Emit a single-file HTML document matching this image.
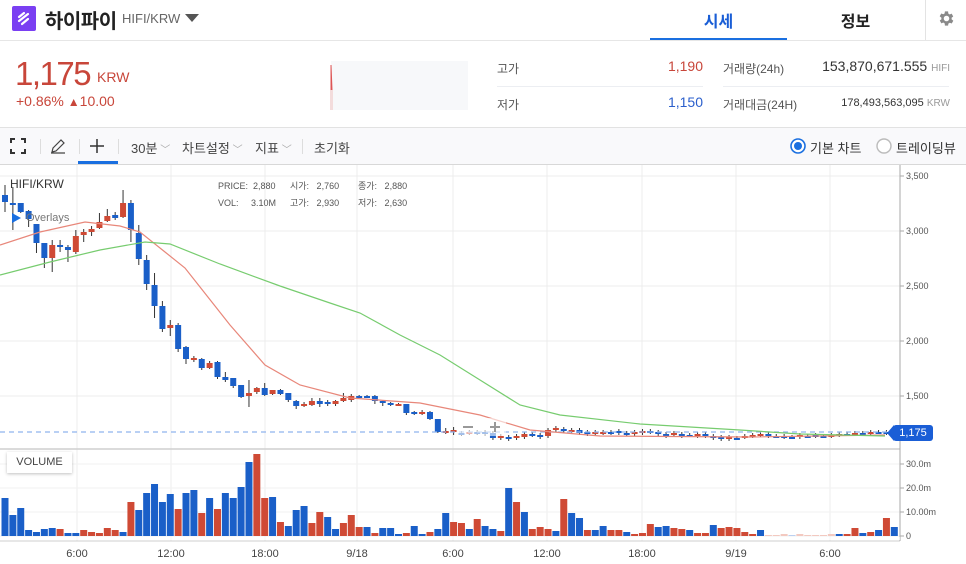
<!DOCTYPE html>
<html><head><meta charset="utf-8">
<style>
*{margin:0;padding:0;box-sizing:border-box}
body{width:966px;height:564px;overflow:hidden;background:#fff;font-family:"Liberation Sans","Noto Sans CJK KR",sans-serif;position:relative;color:#333}
.a{position:absolute;white-space:nowrap}
</style></head><body>
<!-- header -->
<div class="a" style="left:12px;top:6px;width:24px;height:25px;background:#7a3ff2;border-radius:2px"></div>
<svg class="a" style="left:12px;top:6px" width="24" height="25" viewBox="0 0 24 25"><path d="M7 11l5-4M7 15l9-7M10 18l6-5" stroke="#fff" stroke-width="2.2" stroke-linecap="round"/></svg>
<div class="a" style="left:45px;top:5px;font-size:20px;font-weight:bold;color:#222;letter-spacing:-0.5px">하이파이</div>
<div class="a" style="left:122px;top:11px;font-size:13px;color:#666">HIFI/KRW</div>
<svg class="a" style="left:185px;top:14px" width="14" height="8"><path d="M0 0h14L7 8z" fill="#555"/></svg>
<div class="a" style="left:650px;top:8px;width:137px;text-align:center;font-size:16px;font-weight:bold;color:#1a5ed6">시세</div>
<div class="a" style="left:650px;top:38px;width:137px;height:3px;background:#1a6fe0"></div>
<div class="a" style="left:787px;top:8px;width:137px;text-align:center;font-size:16px;font-weight:bold;color:#222">정보</div>
<div class="a" style="left:925px;top:0;width:1px;height:40px;background:#e3e3e3"></div>
<svg class="a" style="left:937px;top:9px" width="19" height="19" viewBox="0 0 24 24"><path fill="#8a8a8a" d="M19.4 13a7.5 7.5 0 000-2l2.1-1.6-2-3.5-2.5 1a7.6 7.6 0 00-1.7-1L15 3h-4l-.4 2.7a7.6 7.6 0 00-1.7 1l-2.5-1-2 3.5L6.6 11a7.5 7.5 0 000 2l-2.1 1.6 2 3.5 2.5-1a7.6 7.6 0 001.7 1L11 21h4l.4-2.7a7.6 7.6 0 001.7-1l2.5 1 2-3.5zM13 15.5a3.5 3.5 0 110-7 3.5 3.5 0 010 7z" transform="translate(-1 0)"/></svg>
<div class="a" style="left:0;top:40px;width:966px;height:1px;background:#e6e6e6"></div>
<!-- price -->
<div class="a" style="left:15px;top:55px;font-size:33px;color:#c8463a;letter-spacing:-1.5px">1,175</div>
<div class="a" style="left:97px;top:69px;font-size:14px;color:#c8463a">KRW</div>
<div class="a" style="left:16px;top:93px;font-size:14px;color:#c8463a">+0.86% <span style="font-size:12px">▲</span>10.00</div>
<div class="a" style="left:331px;top:61px;width:137px;height:49px;background:#f7f8fa"></div>
<svg class="a" style="left:330px;top:60px" width="10" height="50"><path d="M1 50V5L2 30" stroke="#d55" stroke-width="1" fill="none"/><rect x="0" y="30" width="3" height="20" fill="#f3dcdc"/></svg>
<div class="a" style="left:497px;top:60px;font-size:12px;color:#555">고가</div>
<div class="a" style="left:600px;top:58px;width:103px;text-align:right;font-size:14px;color:#c8463a">1,190</div>
<div class="a" style="left:497px;top:86px;width:206px;height:1px;background:#eceef2"></div>
<div class="a" style="left:497px;top:96px;font-size:12px;color:#555">저가</div>
<div class="a" style="left:600px;top:94px;width:103px;text-align:right;font-size:14px;color:#2b5fcc">1,150</div>
<div class="a" style="left:723px;top:60px;font-size:12px;color:#555">거래량(24h)</div>
<div class="a" style="left:760px;top:58px;width:190px;text-align:right;font-size:14px;color:#333">153,870,671.555 <span style="font-size:10px;color:#999">HIFI</span></div>
<div class="a" style="left:723px;top:86px;width:226px;height:1px;background:#eceef2"></div>
<div class="a" style="left:723px;top:96px;font-size:12px;color:#555">거래대금(24H)</div>
<div class="a" style="left:760px;top:97px;width:190px;text-align:right;font-size:11px;color:#333">178,493,563,095 <span style="font-size:10px;color:#999">KRW</span></div>
<!-- toolbar -->
<div class="a" style="left:0;top:127px;width:966px;height:38px;background:#f9f9fb;border-top:1px solid #e2e2e2;border-bottom:1px solid #d8d8d8"></div>
<svg class="a" style="left:10px;top:138px" width="16" height="16"><path d="M1 5V1h4M11 1h4v4M15 11v4h-4M5 15H1v-4" stroke="#333" stroke-width="2" fill="none"/></svg>
<div class="a" style="left:40px;top:139px;width:1px;height:15px;background:#ddd"></div>
<svg class="a" style="left:49px;top:137px" width="18" height="18"><path d="M2 16h14M3 15l1-4 8-8 3 3-8 8z" stroke="#444" stroke-width="1.2" fill="none"/></svg>
<div class="a" style="left:79px;top:139px;width:1px;height:15px;background:#ddd"></div>
<svg class="a" style="left:89px;top:138px" width="16" height="16"><path d="M8 1v14M1 8h14" stroke="#333" stroke-width="1.5"/></svg>
<div class="a" style="left:78px;top:161px;width:40px;height:3px;background:#1a6fe0"></div>
<div class="a" style="left:118px;top:139px;width:1px;height:15px;background:#ddd"></div>
<div class="a" style="left:131px;top:138px;font-size:13px;color:#444">30분<span style="color:#aaa;font-size:10px"> ﹀</span></div>
<div class="a" style="left:182px;top:138px;font-size:13px;color:#444">차트설정<span style="color:#aaa;font-size:10px"> ﹀</span></div>
<div class="a" style="left:255px;top:138px;font-size:13px;color:#444">지표<span style="color:#aaa;font-size:10px"> ﹀</span></div>
<div class="a" style="left:302px;top:139px;width:1px;height:15px;background:#ddd"></div>
<div class="a" style="left:314px;top:138px;font-size:13px;color:#444">초기화</div>
<svg class="a" style="left:790px;top:138px" width="16" height="16"><circle cx="8" cy="8" r="7" stroke="#1a6fe0" stroke-width="1.6" fill="#fff"/><circle cx="8" cy="8" r="4" fill="#1a6fe0"/></svg>
<div class="a" style="left:810px;top:138px;font-size:13px;color:#333">기본 차트</div>
<svg class="a" style="left:876px;top:138px" width="16" height="16"><circle cx="8" cy="8" r="7" stroke="#bbb" stroke-width="1.4" fill="#fff"/></svg>
<div class="a" style="left:896px;top:138px;font-size:13px;color:#333">트레이딩뷰</div>
<!-- chart -->
<svg id="ch" class="a" style="left:0;top:0" width="966" height="564"></svg>
<div class="a" style="left:10px;top:177px;font-size:12px;color:#333">HIFI/KRW</div>
<div class="a" style="left:218px;top:178px;font-size:9px;color:#555;line-height:17px">PRICE: &nbsp;2,880<br>VOL: &nbsp;&nbsp;&nbsp;&nbsp;3.10M</div>
<div class="a" style="left:290px;top:178px;font-size:9px;color:#555;line-height:17px">시가: &nbsp;&nbsp;2,760<br>고가: &nbsp;&nbsp;2,930</div>
<div class="a" style="left:358px;top:178px;font-size:9px;color:#555;line-height:17px">종가: &nbsp;&nbsp;2,880<br>저가: &nbsp;&nbsp;2,630</div>
<svg class="a" style="left:12px;top:213px" width="9" height="10"><path d="M0 0l9 5-9 5z" fill="#1a6fe0"/></svg>
<div class="a" style="left:26px;top:212px;font-size:11px;color:#777">Overlays</div>
<div class="a" style="left:7px;top:452px;width:65px;height:21px;background:#fff;box-shadow:0 1px 3px rgba(0,0,0,.25);font-size:11px;color:#444;text-align:center;line-height:21px">VOLUME</div>
<div class="a" style="left:893px;top:425px;width:40px;height:16px;background:#1a5ed6;border-radius:3px;color:#fff;font-size:11px;text-align:center;line-height:16px">1,175</div>
<svg class="a" style="left:887px;top:425px" width="7" height="16"><path d="M7 0v16L0 8z" fill="#1a5ed6"/></svg>
<script>
var s=document.getElementById('ch'),h='';
var R='#cf4a35',B='#1a5fc8';
[77,171,265,357,453,547,642,736,830].forEach(function(x){h+='<line x1="'+x+'" y1="165" x2="'+x+'" y2="541" stroke="#ececec"/>'});
[176,231,286,341,396].forEach(function(y){h+='<line x1="0" y1="'+y+'" x2="900" y2="'+y+'" stroke="#ececec"/>'});
[464,488,512,536].forEach(function(y){h+='<line x1="0" y1="'+y+'" x2="900" y2="'+y+'" stroke="#f2f2f2"/>'});
h+='<line x1="0" y1="449" x2="900" y2="449" stroke="#cfcfcf" stroke-width="1.5"/>';
h+='<line x1="0" y1="541" x2="900" y2="541" stroke="#cfcfcf"/>';
h+='<line x1="900" y1="165" x2="900" y2="541" stroke="#aaa"/>';
var pl=[[176,'3,500'],[231,'3,000'],[286,'2,500'],[341,'2,000'],[396,'1,500']];
pl.forEach(function(p){h+='<line x1="900" y1="'+p[0]+'" x2="904" y2="'+p[0]+'" stroke="#aaa"/><text x="906" y="'+(p[0]+3)+'" font-size="9" fill="#555" font-family="Liberation Sans">'+p[1]+'</text>'});
[[464,'30.0m'],[488,'20.0m'],[512,'10.00m'],[536,'0']].forEach(function(p){h+='<line x1="900" y1="'+p[0]+'" x2="904" y2="'+p[0]+'" stroke="#aaa"/><text x="906" y="'+(p[0]+3)+'" font-size="9" fill="#555" font-family="Liberation Sans">'+p[1]+'</text>'});
[[77,'6:00'],[171,'12:00'],[265,'18:00'],[357,'9/18'],[453,'6:00'],[547,'12:00'],[642,'18:00'],[736,'9/19'],[830,'6:00']].forEach(function(p){h+='<text x="'+p[0]+'" y="557" font-size="11" fill="#444" text-anchor="middle" font-family="Liberation Sans">'+p[1]+'</text>'});
var C=[[195,202,185,212],[203,204,187,230],[203,212,203,213],[211,219,210,227],[224,243,224,253],[243,258,243,268],[258,245,240,272],[245,247,240,252],[247,250,245,262],[252,236,230,254],[235,232,229,242],[232,229,226,236],[228,222,213,229],[221,216,209,222],[215,218,212,220],[217,203,190,218],[203,230,200,242],[233,259,225,265],[260,284,255,290],[285,306,273,318],[306,329,301,332],[328,325,320,336],[325,349,323,352],[347,359,346,364],[360,358,356,362],[359,368,358,370],[368,363,361,369],[362,377,361,379],[377,380,372,382],[378,386,378,388],[385,397,385,398],[396,393,380,407],[392,388,387,394],[388,395,383,396],[394,390,390,395],[390,394,389,395],[393,400,393,402],[401,406,400,409],[406,404,402,407],[405,401,398,406],[401,404,398,407],[402,404,400,406],[404,401,400,406],[401,398,393,402],[400,396,394,402],[396,397,395,398],[396,397,395,398],[396,401,395,404],[401,403,400,406],[403,405,402,406],[405,404,403,406],[404,413,404,415],[412,414,411,415],[414,412,410,415],[412,419,411,420],[419,432,419,433],[432,431,428,434],[432,430,427,435]];
var rest=[[433,434],[433,432],[432,433],[432,434],[433,438],[438,436],[437,439],[438,436],[437,434],[434,435],[435,437],[436,430],[430,428],[429,431],[431,430],[430,433],[432,434],[434,432],[433,432],[432,433],[431,433],[433,434],[434,432],[433,431],[431,432],[432,434],[434,436],[435,433],[434,436],[435,435],[436,434],[434,436],[436,438],[437,439],[439,437],[438,438],[437,436],[436,435],[435,434],[434,436],[436,436],[436,437],[437,437],[437,435],[436,436],[435,436],[436,436],[436,435],[435,434],[434,434],[434,433],[433,434],[434,432],[432,432],[432,433],[433,432]];
rest.forEach(function(r){C.push([r[0],r[1],Math.min(r[0],r[1])-2,Math.max(r[0],r[1])+2])});
C.forEach(function(c,i){var x=5+i*7.87,up=c[1]<c[0],col=up?R:B,t=Math.min(c[0],c[1]),bh=Math.max(2,Math.abs(c[0]-c[1]));
h+='<line x1="'+x+'" y1="'+c[2]+'" x2="'+x+'" y2="'+c[3]+'" stroke="#333" stroke-width="1"/><rect x="'+(x-3)+'" y="'+t+'" width="6" height="'+bh+'" fill="'+col+'"/>'});
h+='<line x1="0" y1="432" x2="890" y2="432" stroke="#8fb4ee" stroke-width="1.2" stroke-dasharray="5,4"/>';
function line(p,c){var d='M'+p[0][0]+' '+p[0][1];for(var i=1;i<p.length;i++)d+='L'+p[i][0]+' '+p[i][1];h+='<path d="'+d+'" stroke="'+c+'" stroke-width="1.2" fill="none"/>'}
line([[0,245],[40,232],[85,222],[120,226],[140,232],[165,252],[185,268],[200,287],[230,325],[265,365],[300,385],[350,398],[420,403],[480,415],[530,430],[600,436],[750,437],[885,435]],'#e8877a');
line([[0,275],[50,262],[100,250],[145,242],[170,244],[220,264],[280,286],[330,303],[360,313],[400,335],[440,355],[480,380],[520,405],[560,415],[640,424],[740,430],[800,434],[885,436]],'#77cc6f');
var V=[[B,38],[B,21],[B,28],[B,6],[B,4],[B,7],[B,8],[R,7],[B,3],[B,3],[R,6],[R,4],[R,3],[R,8],[R,6],[B,4],[R,34],[B,26],[B,43],[B,52],[B,34],[B,42],[R,27],[B,43],[B,46],[R,23],[B,38],[R,27],[B,43],[B,38],[B,49],[B,74],[R,82],[R,38],[B,39],[R,14],[B,10],[B,26],[B,30],[R,13],[R,24],[B,19],[B,7],[R,13],[R,21],[R,9],[B,9],[R,3],[B,8],[B,8],[B,2],[R,3],[B,10],[B,2],[R,4],[B,7],[B,23],[R,14],[R,13],[B,7],[R,17],[B,10],[B,7],[R,5],[B,48],[R,34],[B,24],[R,7],[R,9],[R,7],[B,5],[R,37],[B,23],[B,18],[R,6],[B,6],[B,10],[R,6],[R,6],[B,4],[R,2],[R,3],[R,12],[B,9],[B,10],[R,8],[R,7],[B,6],[R,3],[R,3],[B,11],[R,8],[R,9],[R,8],[R,4],[R,2],[B,6],['#f3c9c0',1],['#f3c9c0',1],['#f3c9c0',2],['#bcd0f0',1],['#f3c9c0',2],['#f3c9c0',1],['#f3c9c0',1],['#f3c9c0',1],['#f3c9c0',2],[B,2],[R,2],[R,8],[B,3],[R,4],[B,6],[R,18],[B,9]];
V.forEach(function(v,i){var x=5+i*7.87;h+='<rect x="'+(x-3.5)+'" y="'+(536-v[1])+'" width="7" height="'+v[1]+'" fill="'+v[0]+'"/>'});
h+='<rect x="0" y="537" width="900" height="3" fill="#fff" opacity=".6"/>';
h+='<rect x="458" y="418" width="48" height="18" fill="#fff" opacity=".6"/><path d="M463 427h10M490 427h10M495 422v10" stroke="#999" stroke-width="2"/>';
s.innerHTML=h;
</script>
</body></html>
